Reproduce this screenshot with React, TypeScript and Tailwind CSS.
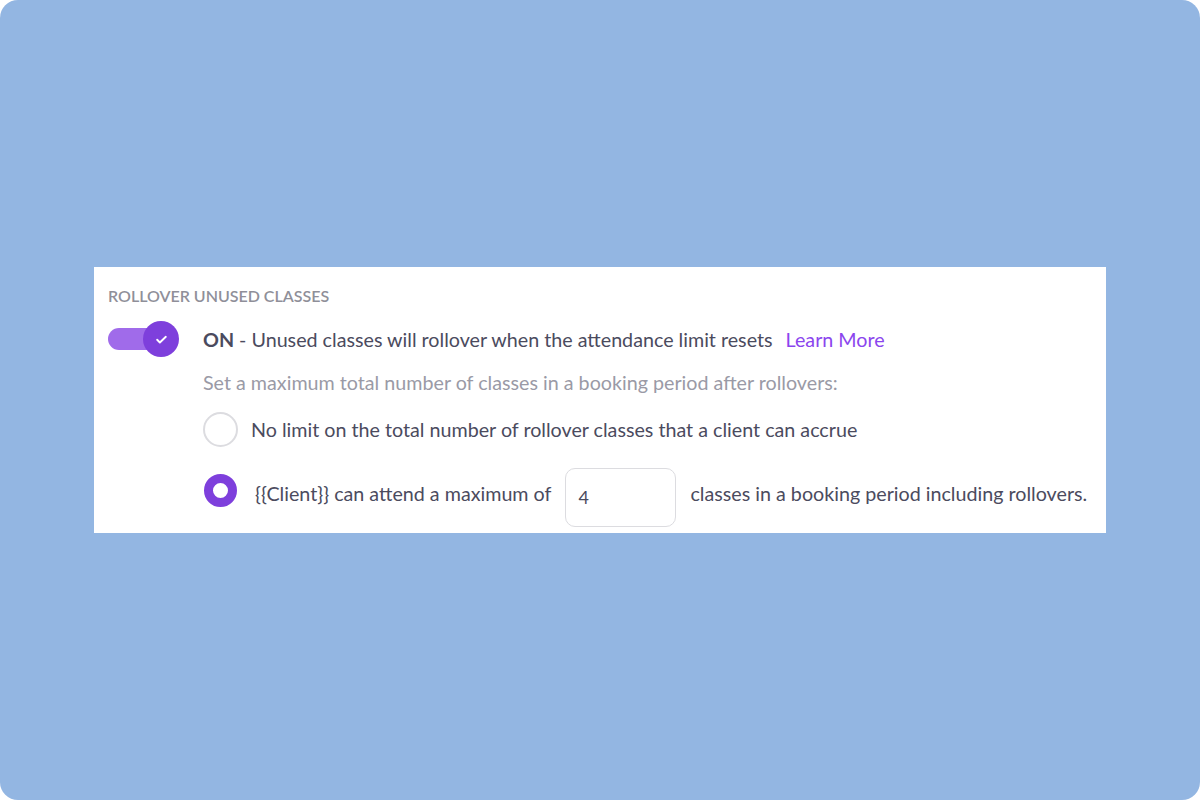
import React from "react";

export default function App() {
  return (
    <div className="w-[1200px] h-[800px] bg-white">
      <div
        className="w-full h-full bg-[#93b6e2] rounded-[18px] flex items-center justify-center"
        style={{ fontFamily: "Lato, 'Noto Sans', sans-serif" }}
      >
        <div className="w-[1012px] h-[266px] bg-white pl-[14px] pt-[20px]">
          <div className="text-[16px] font-semibold text-[#8f8f99] leading-[18px]">
            ROLLOVER UNUSED CLASSES
          </div>
          <div className="flex items-center mt-[16px]">
            <div className="relative w-[72px] h-[36px] flex items-center">
              <div className="w-[58px] h-[22px] rounded-full bg-[#a06bea]" />
              <div className="absolute left-[35px] top-0 w-[36px] h-[36px] rounded-full bg-[#7e3fdc] flex items-center justify-center">
                <svg width="13" height="13" viewBox="0 0 24 24" fill="none" stroke="white" strokeWidth="3.5" strokeLinecap="round" strokeLinejoin="round">
                  <path d="M4 12.5l5 5L20 7" />
                </svg>
              </div>
            </div>
            <div className="ml-[23px] mt-[2px] text-[19.7px] text-[#4b4b5e] leading-[24px]">
              <span className="font-bold">ON</span> - Unused classes will rollover when the attendance limit resets
              <span className="ml-[13px] text-[#8b45ee]">Learn More</span>
            </div>
          </div>
          <div className="ml-[95px] mt-[14px] text-[19.7px] text-[#9a9aa6] leading-[24px]">
            Set a maximum total number of classes in a booking period after rollovers:
          </div>
          <div className="ml-[95px] mt-[17px] flex items-center">
            <div className="w-[35px] h-[35px] rounded-full border-2 border-[#dcdce0] bg-white" />
            <div className="ml-[13px] text-[19.7px] text-[#4b4b5e] leading-[24px]">
              No limit on the total number of rollover classes that a client can accrue
            </div>
          </div>
          <div className="ml-[95px] mt-[14px] flex items-center">
            <div className="w-[33px] h-[33px] mb-[7px] ml-[1px] rounded-full border-[9px] border-[#7e3fdc] bg-white" />
            <div className="ml-[18px] text-[19.7px] text-[#4b4b5e] leading-[24px]">
              {"{{Client}}"} can attend a maximum of
            </div>
            <div className="ml-[14px] mt-[7px] w-[111px] h-[59px] rounded-[10px] border border-[#dcdce0] flex items-center pl-[12px] text-[18px] text-[#4b4b5e]">
              4
            </div>
            <div className="ml-[14px] text-[19.7px] text-[#4b4b5e] leading-[24px]">
              classes in a booking period including rollovers.
            </div>
          </div>
        </div>
      </div>
    </div>
  );
}
